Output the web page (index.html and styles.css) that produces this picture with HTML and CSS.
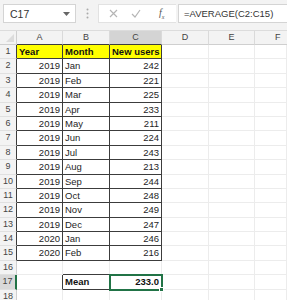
FILE: index.html
```html
<!DOCTYPE html>
<html lang="en">

<head>
  <meta charset="UTF-8">
  <meta name="viewport" content="width=device-width, initial-scale=1.0">
  <title>Mean</title>
  <link rel="stylesheet" href="styles.css">
</head>

<body>
  <div class="bar">
    <div class="namebox">
      <span>C17</span>
      <svg width="7" height="4" viewBox="0 0 7 4"><path d="M0 0h7L3.5 4z" fill="#666"/></svg>
    </div>
    <div class="grip">
      <svg width="3" height="11" viewBox="0 0 3 11"><circle cx="1.5" cy="1.5" r="1" fill="#aaa"/><circle cx="1.5" cy="5.5" r="1" fill="#aaa"/><circle cx="1.5" cy="9.5" r="1" fill="#aaa"/></svg>
    </div>
    <div class="btns">
      <svg width="9" height="9" viewBox="0 0 9 9"><path d="M1 1l7 7M8 1l-7 7" stroke="#b5b5b5" stroke-width="1.2"/></svg>
      <svg width="10" height="9" viewBox="0 0 10 9"><path d="M1 5l3 3 5-7" stroke="#b5b5b5" stroke-width="1.2" fill="none"/></svg>
      <span class="fx">f<sub>x</sub></span>
    </div>
    <div class="formula">=AVERAGE(C2:C15)</div>
  </div>

  <div class="sheet">
    <div class="corner"></div><div class="ch dk">A</div><div class="ch dk">B</div><div class="ch dk sel">C</div><div class="ch">D</div><div class="ch">E</div><div class="ch">F</div>

    <div class="rh dk">1</div><div class="c t hd">Year</div><div class="c t hd">Month</div><div class="c t hd">New users</div><div class="c"></div><div class="c"></div><div class="c"></div>
    <div class="rh dk">2</div><div class="c t num">2019</div><div class="c t">Jan</div><div class="c t num">242</div><div class="c"></div><div class="c"></div><div class="c"></div>
    <div class="rh dk">3</div><div class="c t num">2019</div><div class="c t">Feb</div><div class="c t num">221</div><div class="c"></div><div class="c"></div><div class="c"></div>
    <div class="rh dk">4</div><div class="c t num">2019</div><div class="c t">Mar</div><div class="c t num">225</div><div class="c"></div><div class="c"></div><div class="c"></div>
    <div class="rh dk">5</div><div class="c t num">2019</div><div class="c t">Apr</div><div class="c t num">233</div><div class="c"></div><div class="c"></div><div class="c"></div>
    <div class="rh dk">6</div><div class="c t num">2019</div><div class="c t">May</div><div class="c t num">211</div><div class="c"></div><div class="c"></div><div class="c"></div>
    <div class="rh dk">7</div><div class="c t num">2019</div><div class="c t">Jun</div><div class="c t num">224</div><div class="c"></div><div class="c"></div><div class="c"></div>
    <div class="rh dk">8</div><div class="c t num">2019</div><div class="c t">Jul</div><div class="c t num">243</div><div class="c"></div><div class="c"></div><div class="c"></div>
    <div class="rh dk">9</div><div class="c t num">2019</div><div class="c t">Aug</div><div class="c t num">213</div><div class="c"></div><div class="c"></div><div class="c"></div>
    <div class="rh dk">10</div><div class="c t num">2019</div><div class="c t">Sep</div><div class="c t num">244</div><div class="c"></div><div class="c"></div><div class="c"></div>
    <div class="rh dk">11</div><div class="c t num">2019</div><div class="c t">Oct</div><div class="c t num">248</div><div class="c"></div><div class="c"></div><div class="c"></div>
    <div class="rh dk">12</div><div class="c t num">2019</div><div class="c t">Nov</div><div class="c t num">249</div><div class="c"></div><div class="c"></div><div class="c"></div>
    <div class="rh dk">13</div><div class="c t num">2019</div><div class="c t">Dec</div><div class="c t num">247</div><div class="c"></div><div class="c"></div><div class="c"></div>
    <div class="rh dk">14</div><div class="c t num">2020</div><div class="c t">Jan</div><div class="c t num">246</div><div class="c"></div><div class="c"></div><div class="c"></div>
    <div class="rh dk">15</div><div class="c t num">2020</div><div class="c t">Feb</div><div class="c t num">216</div><div class="c"></div><div class="c"></div><div class="c"></div>
    <div class="rh">16</div><div class="c"></div><div class="c bb"></div><div class="c bb"></div><div class="c"></div><div class="c"></div><div class="c"></div>
    <div class="rh sel">17</div><div class="c br"></div><div class="c t bold">Mean</div><div class="c t num bold active">233.0</div><div class="c"></div><div class="c"></div><div class="c"></div>
    <div class="rh">18</div><div class="c"></div><div class="c"></div><div class="c"></div><div class="c"></div><div class="c"></div><div class="c"></div>
  </div>
</body>

</html>
```

FILE: styles.css
```css
body {
  margin: 0;
  background-color: #fff;
  font-family: "Liberation Sans", Arial, sans-serif;
  color: #1e1e1e;
  overflow: hidden;
}

/* formula bar */
.bar {
  display: flex;
  align-items: flex-start;
  height: 31px;
  padding: 4px 0 0 3px;
  box-sizing: border-box;
  background-color: #f3f3f3;
  border-bottom: 1px solid #dcdcdc;
}

.namebox {
  display: flex;
  align-items: center;
  justify-content: space-between;
  width: 73px;
  height: 19px;
  padding: 0 5px 0 6px;
  box-sizing: border-box;
  background-color: #fff;
  border: 1px solid #d4d4d4;
  font-size: 10.5px;
  color: #333;
}

.grip {
  display: flex;
  justify-content: center;
  align-items: center;
  width: 22px;
  height: 19px;
}

.btns {
  display: flex;
  align-items: center;
  width: 78px;
  height: 19px;
  padding-left: 10px;
  box-sizing: border-box;
  background-color: #fff;
  border: 1px solid #e2e2e2;
  border-right: none;
}

.btns svg + svg {
  margin-left: 13px;
}

.fx {
  margin-left: 18px;
  font-family: "Liberation Serif", serif;
  font-style: italic;
  font-size: 10px;
  color: #555;
}

.fx sub {
  font-size: 6px;
}

.formula {
  flex: 1;
  height: 19px;
  margin-left: 2px;
  padding-left: 5px;
  box-sizing: border-box;
  background-color: #fff;
  border: 1px solid #d4d4d4;
  border-right: none;
  font-size: 9.5px;
  line-height: 17px;
  color: #333;
}

/* grid */
.sheet {
  display: grid;
  grid-template-columns: 17px 46px 47px 52px 47px 46px 32px;
  grid-template-rows: 14px repeat(18, 14.4px);
  width: 287px;
  overflow: hidden;
  font-size: 9.5px;
}

.sheet > div {
  box-sizing: border-box;
  border-right: 1px solid #ececec;
  border-bottom: 1px solid #ececec;
  white-space: nowrap;
  overflow: hidden;
  line-height: 13px;
}

.corner {
  position: relative;
  background-color: #f3f3f3;
  border-right-color: #cfcfcf !important;
  border-bottom-color: #cfcfcf !important;
}

.corner::after {
  content: '';
  position: absolute;
  right: 2px;
  bottom: 2px;
  border-left: 8px solid transparent;
  border-bottom: 8px solid #dcdcdc;
}

.ch {
  background-color: #f3f3f3;
  text-align: center;
  color: #444;
  font-size: 9px;
  border-right-color: #dadada !important;
  border-bottom-color: #cfcfcf !important;
}

.ch:nth-child(7) {
  padding-left: 20px;
  text-align: left;
  border-right: none;
}

.rh {
  background-color: #f3f3f3;
  text-align: center;
  color: #444;
  font-size: 9px;
  border-right-color: #cfcfcf !important;
  border-bottom-color: #e0e0e0 !important;
}

.ch.sel {
  background-color: #d4d4d4;
}

.rh.sel {
  background-color: #d9d9d9;
  border-right: 2px solid #217346 !important;
}

.ch.dk,
.bb {
  border-bottom-color: #3c3c3c !important;
}

.rh.dk,
.br {
  border-right-color: #3c3c3c !important;
}

.c {
  padding: 0 2px;
}

.t {
  border-right-color: #3c3c3c !important;
  border-bottom-color: #3c3c3c !important;
}

.hd {
  background-color: #ffff00;
  font-weight: bold;
  color: #111;
}

.bold {
  font-weight: bold;
  color: #111;
}

.num {
  text-align: right;
}

.active {
  position: relative;
  overflow: visible !important;
  outline: 2px solid #217346;
  outline-offset: -1px;
}

.active::after {
  content: '';
  position: absolute;
  right: -3px;
  bottom: -3px;
  width: 5px;
  height: 5px;
  background-color: #217346;
  border: 1px solid #fff;
  box-sizing: border-box;
}
```
